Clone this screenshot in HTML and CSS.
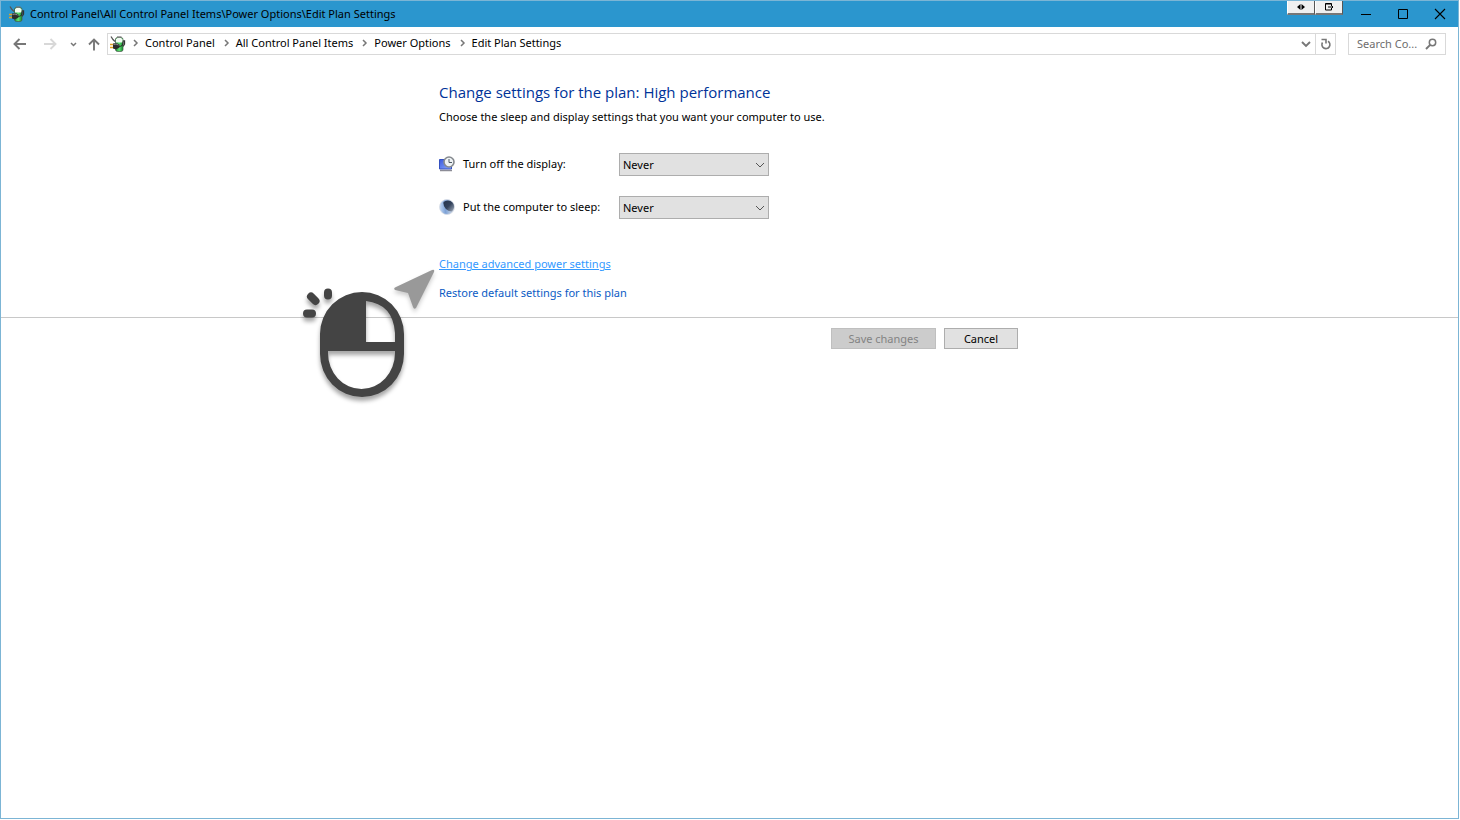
FILE: index.html
```html
<!DOCTYPE html>
<html lang="en">
<head>
<meta charset="utf-8">
<title>Edit Plan Settings</title>
<link rel="stylesheet" href="styles.css">
</head>
<body>
<svg class="symbols" aria-hidden="true">
  <defs>
    <linearGradient id="battery-fill" x1="0" x2="1"><stop offset="0" stop-color="#118c2a"/><stop offset=".5" stop-color="#62e474"/><stop offset="1" stop-color="#128a2c"/></linearGradient>
    <linearGradient id="screen-fill" x1="0" y1="0" x2="1" y2="1"><stop offset="0" stop-color="#3a58dc"/><stop offset="1" stop-color="#8cacff"/></linearGradient>
    <linearGradient id="moon-fill" x1="0" x2="1"><stop offset="0" stop-color="#c4daf6"/><stop offset=".4" stop-color="#7ea2d6"/><stop offset="1" stop-color="#dfe3e8"/></linearGradient>
    <linearGradient id="moon-shade" x1="0" y1="0" x2="1" y2="1"><stop offset="0" stop-color="#26354e"/><stop offset=".5" stop-color="#34435c"/><stop offset="1" stop-color="#a4afbf"/></linearGradient>
    <symbol id="power" viewBox="0 0 16 16">
      <path d="M1 .5l2 3 2 2" fill="none" stroke="#555" stroke-width="1.300"/>
      <path d="M12 5h2.500v3L13 10.500" fill="none" stroke="#333" stroke-width="1.300"/>
      <rect x="5.500" y="1.500" width="7.500" height="14" rx="2" fill="url(#battery-fill)" stroke="#4a5a4c" stroke-width=".7"/>
      <path d="M6 3Q9 .5 12.500 3V6.500H6z" fill="#f2faf2"/>
      <path d="M7 1h4.500" stroke="#777" stroke-width="1.300"/>
      <path d="M0 8.500h3.500M0 11.500h3.500" stroke="#e0a020" stroke-width="1.500"/>
      <path d="M3 7.500L6 7l3.500 1.500V11.500L6 13.500 3 12.500z" fill="#2c2c2c"/>
      <path d="M3.500 8.500l2.500-.5 2.500 1" fill="none" stroke="#999" stroke-width=".9"/>
      <path d="M9 10.500q4.500 0 4-5" fill="none" stroke="#2c2c2c" stroke-width="1.200"/>
    </symbol>
    <symbol id="crumb" viewBox="0 0 6 8"><path d="M1 1l3 3-3 3" fill="none" stroke="#777" stroke-width="1.500"/></symbol>
  </defs>
</svg>
<div class="window">
  <header class="titlebar">
    <svg class="app-icon"><use href="#power"/></svg>
    <span class="title">Control Panel\All Control Panel Items\Power Options\Edit Plan Settings</span>
    <div class="extras">
      <button class="extra" aria-label="Move"><svg width="8" height="6" viewBox="0 0 8 6"><path d="M3.500 0v6L0 3zM4.500 0v6L8 3z" fill="#000"/></svg></button>
      <button class="extra" aria-label="Send to monitor"><svg width="9" height="8" viewBox="0 0 9 8"><path d="M6.500 2V.5h-6v6.500h6V6M3 4h5M6 2l2 2-2 2M.5 1h6" fill="none" stroke="#000"/></svg></button>
    </div>
    <div class="controls">
      <button class="control" aria-label="Minimize"><svg width="12" height="12"><path d="M1 6.500h10" stroke="#000"/></svg></button>
      <button class="control" aria-label="Maximize"><svg width="12" height="12"><path d="M1.500 1.500h9v9h-9z" stroke="#000" fill="none"/></svg></button>
      <button class="control" aria-label="Close"><svg width="12" height="12"><path d="M1 1l10 10M11 1L1 11" stroke="#000" stroke-width="1.100"/></svg></button>
    </div>
  </header>
  <div class="toolbar">
    <nav class="history">
      <button class="tool back" aria-label="Back"><svg width="14" height="12" viewBox="0 0 14 12"><path d="M13 6H1.500M6.500 1l-5 5 5 5" fill="none" stroke="#777" stroke-width="1.900"/></svg></button>
      <button class="tool forward" aria-label="Forward"><svg width="14" height="12" viewBox="0 0 14 12"><path d="M1 6h11.500M7.500 1l5 5-5 5" fill="none" stroke="#d8d8d8" stroke-width="1.900"/></svg></button>
      <button class="tool recent" aria-label="Recent locations"><svg width="7" height="5" viewBox="0 0 7 5"><path d="M1 1l2.500 2.500L6 1" fill="none" stroke="#777" stroke-width="1.500"/></svg></button>
      <button class="tool up" aria-label="Up"><svg width="12" height="13" viewBox="0 0 12 13"><path d="M6 12.500V1.500M1 6.500l5-5 5 5" fill="none" stroke="#777" stroke-width="1.900"/></svg></button>
    </nav>
    <div class="address">
      <svg class="address-icon"><use href="#power"/></svg>
      <nav class="crumbs" aria-label="Location">
        <svg class="sep"><use href="#crumb"/></svg><a href="#">Control Panel</a>
        <svg class="sep"><use href="#crumb"/></svg><a href="#">All Control Panel Items</a>
        <svg class="sep"><use href="#crumb"/></svg><a href="#">Power Options</a>
        <svg class="sep"><use href="#crumb"/></svg><a href="#">Edit Plan Settings</a>
      </nav>
      <button class="tool expand" aria-label="Previous locations"><svg width="10" height="7" viewBox="0 0 10 7"><path d="M1 1l4 4 4-4" fill="none" stroke="#777" stroke-width="1.900"/></svg></button>
      <button class="tool refresh" aria-label="Refresh"><svg width="12" height="12" viewBox="0 0 12 12"><path d="M8 3.200A4 4 0 1 1 2.500 4.500" fill="none" stroke="#777" stroke-width="1.600"/><path d="M1.500 1.500h4.500V5.500" fill="none" stroke="#777" stroke-width="1.600"/></svg></button>
    </div>
    <form class="search">
      <input class="search-input" type="text" placeholder="Search Co..." aria-label="Search Control Panel">
      <svg width="12" height="12" viewBox="0 0 12 12"><circle cx="7.500" cy="4.500" r="3.200" fill="none" stroke="#777" stroke-width="1.500"/><path d="M5.200 6.800L1 11" stroke="#777" stroke-width="1.900"/></svg>
    </form>
  </div>
  <main>
    <section class="column">
      <h1>Change settings for the plan: High performance</h1>
      <p class="intro">Choose the sleep and display settings that you want your computer to use.</p>
      <div class="setting">
        <svg class="setting-icon" viewBox="0 0 16 16"><path d="M.5 3.500h12V13H.5z" fill="url(#screen-fill)" stroke="#3450c0"/><path d="M1 14.500h12" stroke="#8c8c96" stroke-width="1.500"/><circle cx="10" cy="6" r="5" fill="#eef2f4" stroke="#85898e" stroke-width="1.600"/><path d="M10 3V6.500h3" fill="none" stroke="#4d5963"/></svg>
        <label for="display">Turn off the display:</label>
        <div class="select-box"><select id="display"><option>Never</option></select><svg class="chevron" width="10" height="6" viewBox="0 0 10 6"><path d="M1 1l4 4 4-4" fill="none" stroke="#555"/></svg></div>
      </div>
      <div class="setting">
        <svg class="setting-icon" viewBox="0 0 16 16"><circle cx="8" cy="8" r="7.500" fill="url(#moon-fill)" stroke="#d5dbe3" stroke-width=".8"/><path d="M4.500 3A6 6 0 0 1 13 12.500Q9 12.500 6.500 9.500 4 6.500 4.500 3z" fill="url(#moon-shade)"/></svg>
        <label for="sleep">Put the computer to sleep:</label>
        <div class="select-box"><select id="sleep"><option>Never</option></select><svg class="chevron" width="10" height="6" viewBox="0 0 10 6"><path d="M1 1l4 4 4-4" fill="none" stroke="#555"/></svg></div>
      </div>
      <div class="links">
        <a class="link hovered" href="#">Change advanced power settings</a>
        <a class="link" href="#">Restore default settings for this plan</a>
        <svg class="click-hint" width="150" height="150" viewBox="0 0 150 150" aria-hidden="true">
          <g class="arrow"><path d="M96 27L132 10Q135 9 134 12L116 48Q114 50 113 47L108 33 95 30Q93 28 96 27z" fill="#999"/></g>
          <g class="mouse">
            <path fill="#444" fill-rule="evenodd" d="M62 32A42 42 0 0 1 104 74V94A42 43 0 0 1 20 94V74A42 42 0 0 1 62 32zM66 41V82H95V73Q93 44 66 41zM28 91V93A33.500 36 0 0 0 95 93V91z"/>
            <path d="M28 35.500V32.500M11 36.500l4.500 4.500M7 53.500h5" fill="none" stroke="#444" stroke-width="8" stroke-linecap="round"/>
          </g>
        </svg>
      </div>
    </section>
    <footer class="actions">
      <div class="column buttons">
        <button class="button save" disabled>Save changes</button>
        <button class="button cancel">Cancel</button>
      </div>
    </footer>
  </main>
</div>
</body>
</html>
```
FILE: styles.css
```css
* { box-sizing: border-box; }
body {
  margin: 0;
  padding: 0 1px 1px 0;
  height: 100vh;
  background: #fff;
  font: 11px/16px "Noto Sans", "Open Sans", sans-serif;
  color: #000;
}
svg { display: block; flex: none; }
button, input, select { font: inherit; color: inherit; }
.symbols { position: absolute; width: 0; height: 0; }
.window { min-height: 100%; border: 1px solid #7cb5d5; }

.titlebar {
  display: flex;
  align-items: center;
  height: 26px;
  padding-left: 8px;
  background: #2b96ce;
}
.app-icon, .address-icon { width: 16px; height: 16px; }
.title { flex: 1; margin-left: 5px; white-space: nowrap; }
.extras { display: flex; align-self: flex-start; }
.extra {
  display: flex;
  align-items: center;
  justify-content: center;
  width: 28px;
  height: 14px;
  padding: 0;
  border: 1px solid #fff;
  border-right-color: #555;
  border-bottom: 2px solid #777;
  border-top: 0;
  background: #f0f0f0;
}
.controls { display: flex; margin-left: 4px; }
.control {
  display: flex;
  align-items: center;
  justify-content: center;
  width: 37px;
  height: 24px;
  padding: 0;
  border: 0;
  background: none;
}

.toolbar {
  display: flex;
  align-items: center;
  padding: 6px 12px 6px 0;
}
.history { display: flex; align-items: center; width: 106px; padding-left: 12px; }
.tool {
  display: flex;
  align-items: center;
  justify-content: center;
  padding: 0;
  border: 0;
  background: none;
}
.forward { margin-left: 16px; }
.recent { margin-left: 13px; }
.up { margin-left: 11px; }
.address { display: flex; flex: 1; align-items: center; height: 22px; border: 1px solid #d9d9d9; padding-left: 2px; }
.crumbs { display: flex; flex: 1; align-items: center; margin-left: 7px; padding-bottom: 2px; white-space: nowrap; }
.crumbs a { color: #000; text-decoration: none; margin: 0 9px 0 6px; }
.sep { width: 6px; height: 8px; }
.expand { width: 19px; height: 20px; }
.refresh { width: 20px; height: 20px; border-left: 1px solid #d9d9d9; }
.search { display: flex; align-items: center; width: 98px; height: 22px; margin: 0 0 0 12px; padding: 0 8px; border: 1px solid #d9d9d9; }
.search-input { flex: 1; min-width: 0; padding: 0; border: 0; outline: 0; background: none; }
.search-input::placeholder { color: #6d6d6d; opacity: 1; }

.column { width: 581px; max-width: 100%; margin: 0 auto; }
h1 { margin: 0; padding-top: 19px; font: 400 15px/24px "Open Sans", "Noto Sans", sans-serif; color: #003399; }
.intro { margin: 5px 0 28px; }
.setting { display: flex; align-items: center; margin-bottom: 20px; }
.setting-icon { width: 16px; height: 16px; margin-bottom: 2px; }
.setting label { width: 156px; margin-left: 8px; padding-bottom: 2px; white-space: nowrap; }
.select-box { position: relative; }
select { display: block; width: 150px; height: 23px; padding: 0 3px; border: 1px solid #adadad; border-radius: 0; background: #e1e1e1; appearance: none; }
.chevron { position: absolute; right: 4px; top: 9px; pointer-events: none; }
.links { position: relative; display: flex; flex-direction: column; align-items: flex-start; gap: 13px; padding: 17px 0 16px; }
.link { color: #0b5bc4; text-decoration: none; }
.hovered { color: #3399ff; text-decoration: underline; }
.click-hint { position: absolute; left: -139px; top: 21px; pointer-events: none; }
.mouse { filter: drop-shadow(0 4px 2px rgba(0, 0, 0, .35)); }
.arrow { filter: drop-shadow(0 3px 2px rgba(0, 0, 0, .2)); }
.actions { border-top: 1px solid #c8c8c8; padding-top: 10px; }
.buttons { display: flex; justify-content: flex-end; gap: 8px; padding-right: 2px; }
.button { height: 21px; padding: 0; border: 1px solid #adadad; background: #e1e1e1; line-height: 16px; }
.save { width: 105px; border-color: #bfbfbf; background: #ccc; color: #838383; }
.cancel { width: 74px; }
```
